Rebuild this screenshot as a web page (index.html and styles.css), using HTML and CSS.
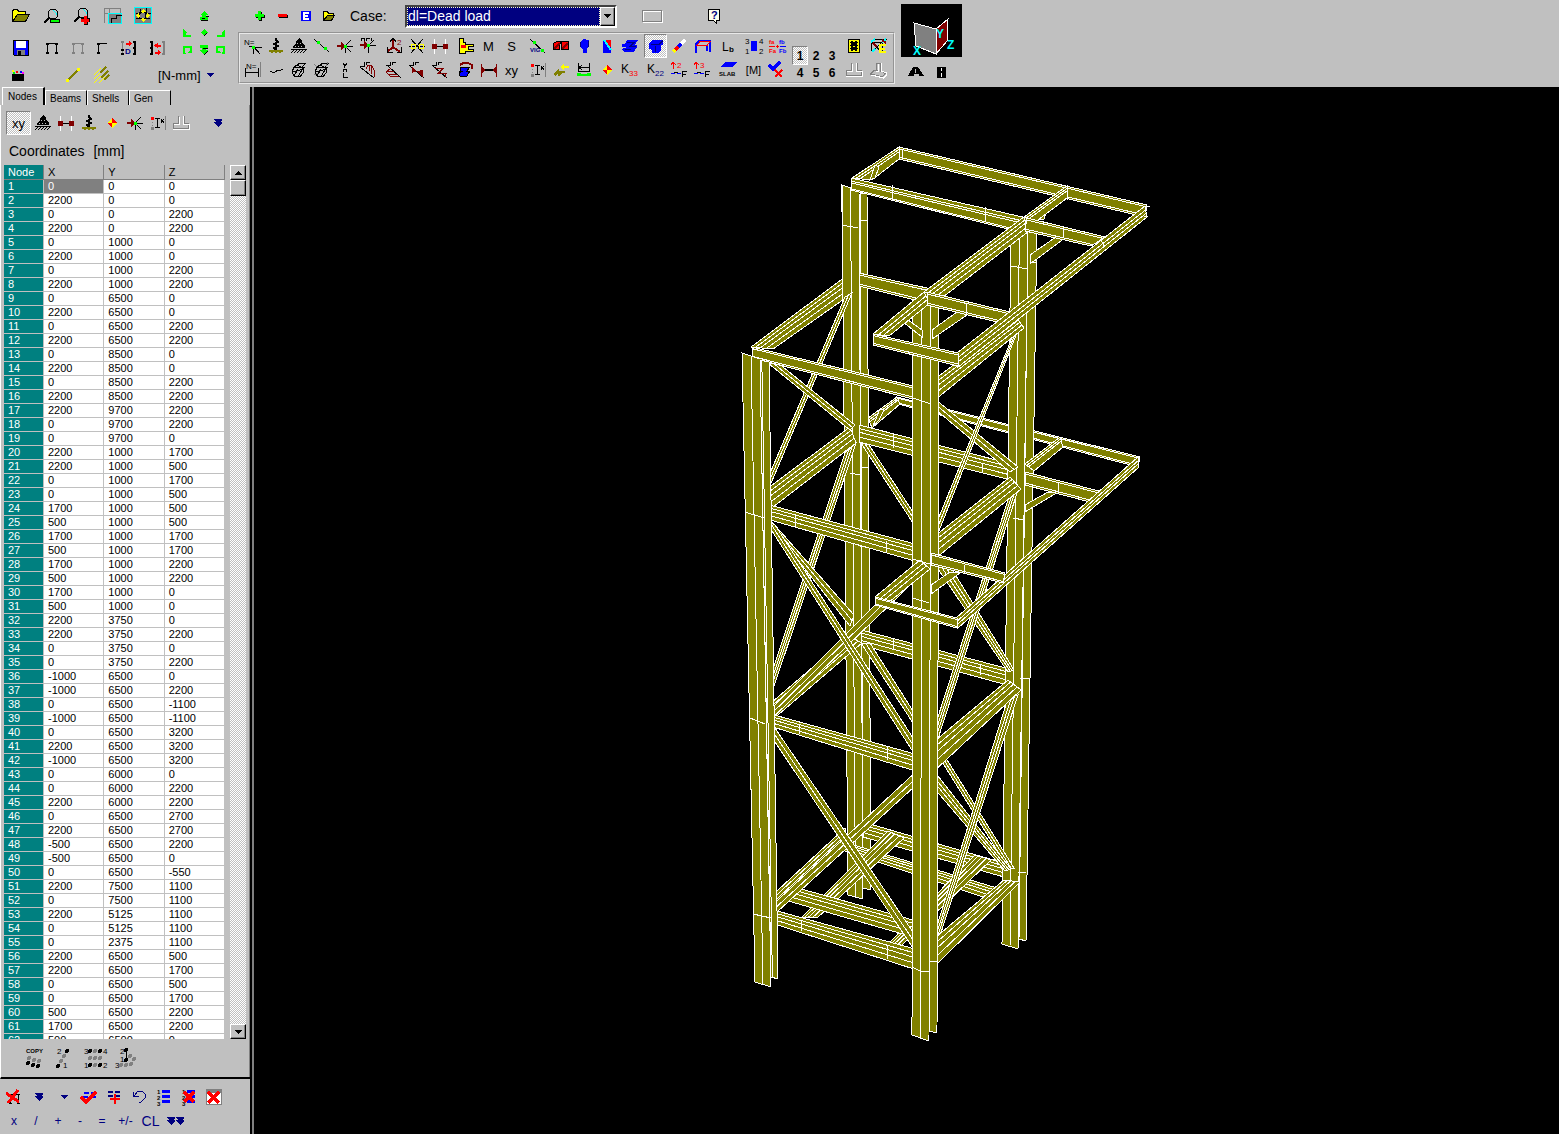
FILE: index.html
```
<!DOCTYPE html>
<html lang="en">
<head>
    <meta charset="UTF-8">
    <meta name="viewport" content="width=device-width, initial-scale=1.0">
    <title>Frame model - Nodes</title>
    <link rel="stylesheet" href="styles.css">
</head>
<body>
    <header class="topbar">
        <div class="file-tools">
            <div class="row row-one">
                <button aria-label="Open"><svg width="20" height="16"><path fill="#ff0" stroke="#000" d="M1.5 13.5v-11l2-1h3l1 2h7v3h-8z"/><path fill="#808000" stroke="#000" d="M1.5 13.5l5-7h12l-4 7z"/></svg></button>
                <button aria-label="Zoom window"><svg width="20" height="18"><circle cx="10" cy="7" r="5" fill="#c0c0c0" stroke="#000"/><path d="M10 3l3 3v2" stroke="#0ff"/><path d="M6 11l-5 5" stroke="#000" stroke-width="2"/><path d="M7.500 12.500h9v3h-9z" fill="#0f0" stroke="#000"/></svg></button>
                <button aria-label="Zoom in"><svg width="20" height="18"><circle cx="10" cy="6" r="5" fill="#c0c0c0" stroke="#000"/><path d="M10 2l3 3v2" stroke="#0ff"/><path d="M6 10l-5 5" stroke="#000" stroke-width="2"/><path d="M8 13h9M12.500 9v9" stroke="#000" stroke-width="4"/><path d="M8 13h8M12 9v8" stroke="red" stroke-width="3"/></svg></button>
                <button aria-label="Zoom part"><svg width="20" height="18"><path d="M1.500 16v-14.500h16v5M1 6.500h5M6.500 1v5" stroke="#808080"/><path d="M5.500 6.500h13v10h-13z" fill="#808080" stroke="#0ff"/><path d="M8.500 16v-5h5M13.500 12v-4h5" stroke="#000"/></svg></button>
                <button aria-label="Full view"><svg width="20" height="18"><path d="M1.500.500h17v16h-17z" fill="#808080" stroke="#0ff"/><path d="M3 6.500h4v-5M7 11.500h-4M13.500 1v5h4M13 11.500h4M6.500 5.500h6v6h-6z" stroke="#000"/><path d="M10 2l3 3h-2v1h-2v-1h-2zM10 15l3-3h-2v-1h-2v1h-2zM3 8.500l3-3v2h1v2h-1v2zM17 8.500l-3-3v2h-1v2h1v2z" fill="#ff0"/></svg></button>
            </div>
            <div class="row row-two">
                <button aria-label="Save"><svg width="18" height="18"><path d="M1.500 1.500h15v15h-14l-1-1z" fill="#00f" stroke="#000"/><path d="M4 2h10v7h-10z" fill="#fff"/><path d="M5 11h8v5h-8z" fill="#808080"/><path d="M6 12h3v4h-3z" fill="#000"/></svg></button>
                <button aria-label="Beam portal"><svg width="14" height="14"><path d="M2.500 12v-9.500h9v9.500M1 2.500h3M10 2.500h3M1 11.500h3M10 11.500h3M1 3.500h3M10 3.500h3M1 12.500h3M10 12.500h3" stroke="#000"/></svg></button>
                <button aria-label="Portal, hidden"><svg width="14" height="14"><path d="M2.500 12v-9.500h9v9.500M1 2.500h3M10 2.500h3M1 3.500h3M10 3.500h3M1 11.500h3M10 11.500h3M1 12.500h3M10 12.500h3" stroke="#808080"/></svg></button>
                <button aria-label="Half portal"><svg width="14" height="14"><path d="M3.500 12v-9.500h8M2 2.500h3M2 3.500h3M2 11.500h3M2 12.500h3" stroke="#000"/></svg></button>
                <button aria-label="Copy frame"><svg width="18" height="16"><path d="M2.500 2v12" stroke="#808080"/><path d="M14.500 2v12M13 2h3M13 8h3M13 14h3M1 10h3M1 14h3" stroke="#000" stroke-width="2"/><path d="M1 2h3" stroke="#808080" stroke-width="2"/><path d="M6 2.500h3v-2l3 3-3 3v-2h-3z" fill="red"/><text x="5" y="14" class="tiny bold" fill="#000080">D</text></svg></button>
                <button aria-label="Move frame"><svg width="18" height="16"><path d="M2.500 2v12M1 2h3M1 8h3M1 14h3" stroke="#000" stroke-width="2"/><path d="M14.500 2v12M13 2h3M13 14h3" stroke="#808080" stroke-width="2"/><path d="M12 4.500h-3v-2l-4 3 4 3v-2h3zM6 11.500h3v-2l3 3-3 3v-2h-3z" fill="red"/></svg></button>
            </div>
            <div class="row row-three">
                <button aria-label="Colours"><svg width="14" height="14"><path d="M1 6h12v7h-12z" fill="#000"/><path d="M1 2h2v2h-2z" fill="#ff0"/><path d="M5 3h2v2h-2z" fill="red"/><path d="M9 3h2v2h-2z" fill="#00f"/><path d="M2 4h2v2h-2z" fill="#0f0"/><path d="M11 4h2v2h-2z" fill="#f0f"/></svg></button>
                <button class="single" aria-label="Single line"><svg width="18" height="16"><path d="M2 14l12-12" stroke="#808000" stroke-width="2"/><path d="M1 12h3v3h-3zM12 1h3v3h-3z" fill="#ff0"/></svg></button>
                <button aria-label="Multiple lines"><svg width="20" height="18"><path d="M8 7l6-6M9 12l7-7M12 14l5-5" stroke="#808000" stroke-width="2"/><path d="M2 9l7-7M2 13l6-6M2 17l7-7M7 17l6-6" stroke="#ff0"/></svg></button>
                <select class="units" aria-label="Units"><option>[N-mm]</option></select>
                <svg width="8" height="5"><path d="M0 0h8l-4 4z" fill="#000080"/></svg>
            </div>
            <div class="nav-pad">
                <span></span>
                <button aria-label="Pan up"><svg width="10" height="12"><path d="M5 1l4 4h-2v2h2v3h-8v-3h2v-2h-2z" fill="#0f0"/><path d="M7 6.500h3M3 8.500h3M2 10.500h7" stroke="#000"/></svg></button>
                <span></span>
                <button aria-label="Rotate left"><svg width="10" height="10"><path d="M1 9v-8l4 4h-1v2h5v2z" fill="#0f0"/></svg></button>
                <button aria-label="Centre"><svg width="8" height="8"><path d="M4 0l4 4-4 3-3-3z" fill="#0f0"/><path d="M7 4l-3 3" stroke="#000"/></svg></button>
                <button aria-label="Rotate right"><svg width="10" height="10"><path d="M9 9v-8l-4 4h1v2h-5v2z" fill="#0f0"/></svg></button>
                <button aria-label="Turn left"><svg width="10" height="10"><path d="M1 9v-8h9v7h-5l2-2h1v-3h-5v3l1 3z" fill="#0f0"/></svg></button>
                <button aria-label="Pan down"><svg width="10" height="12"><path d="M1 1h8v3h-2v2h2l-4 5-4-5h2v-2h-2z" fill="#0f0"/><path d="M4 4.500h5M9 7l-4 4" stroke="#000"/></svg></button>
                <button aria-label="Turn right"><svg width="10" height="10"><path d="M9 9v-8h-9v7h5l-2-2h-1v-3h5v3l-1 3z" fill="#0f0"/></svg></button>
            </div>
        </div>

        <div class="load-tools">
            <div class="case-bar">
                <button aria-label="Add case"><svg width="12" height="12"><path d="M2 6.500h9M6.500 2v9" stroke="#000" stroke-width="3"/><path d="M1 5.500h9M5.500 1v9" stroke="#0f0" stroke-width="3"/></svg></button>
                <button aria-label="Delete case"><svg width="12" height="12"><path d="M2 6.500h9" stroke="#000" stroke-width="3"/><path d="M1 5.500h9" stroke="red" stroke-width="3"/></svg></button>
                <button aria-label="Edit case"><svg width="12" height="12"><path d="M1 1h10v10h-10z" fill="#00f"/><path d="M9 3h-5v6h5M4 6h4" stroke="#fff" stroke-width="2"/></svg></button>
                <button aria-label="Open case"><svg width="14" height="12"><path fill="#ff0" stroke="#000" d="M1.500 10.500v-9h4l1 2h5v2h-6z"/><path fill="#808000" stroke="#000" d="M1.500 10.500l4-5h7l-3 5z"/></svg></button>
                <label for="load-case">Case:</label>
                <div class="combo">
                    <select id="load-case"><option>dl=Dead load</option></select>
                    <span class="combo-arrow bevel"><svg width="7" height="4"><path d="M0 0h7l-3.500 4z" fill="#000"/></svg></span>
                </div>
                <button class="blank" aria-label="Case colour"></button>
                <button class="help" aria-label="Help"><svg width="14" height="16"><path d="M1.500 1.500h11v11h-3v3l-3-3h-5z" fill="#ffe" stroke="#000"/><text x="4" y="11" class="bold help-mark" fill="#000080">?</text></svg></button>
            </div>

            <div class="result-box">
                <div class="strip">
                    <span class="group">
                        <button aria-label="Node numbers"><svg class="icon"><text x="1" y="8" class="tiny">N=</text><path d="M6 9.500h6M11 10l6 7M11 10.500h8M10.500 11v6" stroke="#000"/><path d="M9 9h3v3h-3z" fill="#0f0"/></svg></button>
                        <button aria-label="Springs"><svg class="icon" id="spring"><path d="M10 1v2l2 2-4 2 4 2-4 2 3 2" stroke="#000" stroke-width="2"/><path d="M3 13h14v2h-2v1h-2v-1h-2v1h-2v-1h-2v1h-2v-1h-2z" fill="#808000"/></svg></button>
                        <button aria-label="Supports"><svg class="icon" id="support"><path d="M10 1l3 3v2l3 3v2h-12v-2l3-3v-2z" fill="#000"/><path d="M2 12.500h16M5 13l-3 3M8 13l-3 3M11 13l-3 3M14 13l-3 3M17 13l-3 3" stroke="#000"/><path d="M6 9.500h1M9 9.500h1M12 9.500h1M8 6.500h1M11 6.500h1" stroke="#c0c0c0"/></svg></button>
                        <button aria-label="Beam"><svg class="icon"><path d="M2 2l15 13" stroke="#000"/><path d="M5 4h3v3h-3zM12 10h3v3h-3z" fill="#0f0"/></svg></button>
                        <button aria-label="Nodal load"><svg class="icon" id="nodeload"><path d="M2 8h4v-3l4 4-4 4v-3h-4z" fill="#800000"/><path d="M10 9.500h8M11 8l5-5M11 10l5 5M10.500 9v7" stroke="#000"/><path d="M9 8h3v3h-3z" fill="#0f0"/></svg></button>
                        <button aria-label="Dynamic load"><svg class="icon"><path d="M2 7h4v-3l4 4-4 4v-3h-4z" fill="#800000"/><path d="M10 8.500h8M11 8l5-5M10.500 9v7M3.500 4v-3h3v3M8.500 4v-3h3M13.500 1v3" stroke="#000"/><path d="M9 7h3v3h-3z" fill="#0f0"/></svg></button>
                    </span>
                    <span class="group">
                        <button aria-label="Local axes"><svg class="icon"><path d="M9 2v8l-6 5M9 10l7 5" stroke="#800000" stroke-width="2"/><path d="M3.500 10v5.500h5M17.500 10v5.500h-5M6 4.500l3-3 3 3" stroke="#000"/><text x="13" y="8" class="tiny" fill="#800000">2</text></svg></button>
                        <button aria-label="Releases"><svg class="icon"><path d="M4 2l12 14M16 2l-12 14M2 9.500h16" stroke="#000"/><path d="M4.500 7.500h4v4h-4zM12.500 7.500h4v4h-4z" stroke="#ff0"/></svg></button>
                        <button aria-label="Rigid links"><svg class="icon" id="link"><path d="M4.500 2v15M15.500 2v15" stroke="#fff"/><path d="M4 9.500h12" stroke="#000"/><path d="M2 7h5v5h-5zM13 7h5v5h-5z" fill="#800000"/></svg></button>
                    </span>
                    <span class="group">
                        <button aria-label="Sections"><svg class="icon"><path d="M3.500 1.500h4v4h2v2h8v2h-5v3h5v2h-8v2h-2v0h-4z" fill="#ff0" stroke="#000"/><path d="M5 8h5v3h-5z" fill="red"/></svg></button>
                        <button class="letter">M</button>
                        <button class="letter">S</button>
                    </span>
                    <span class="group">
                        <button aria-label="View beam"><svg class="icon"><path d="M2 2l15 14" stroke="#000"/><path d="M5 4h3v3h-3zM13 12h3v3h-3z" fill="#0f0"/><text x="2" y="15" class="micro" fill="#000080">VIG</text></svg></button>
                        <button aria-label="Brick elements"><svg class="icon"><path d="M2.500 6.500l3-2h5l-2 3v5h-6zM10.500 4.500h7v8h-7z" fill="red" stroke="#000"/><path d="M3 11.500l6-5M11 11.500l6-5" stroke="#800000" stroke-width="2"/></svg></button>
                        <button aria-label="Solid view"><svg class="icon"><path d="M9 2l6 1v7l-2 1v5h-4v-4l-3-2v-5z" fill="#00f"/><path d="M6.500 5v5M14.500 4v6" stroke="#000080"/></svg></button>
                        <button aria-label="Stress map"><svg class="icon"><path d="M6 3h8v13h-8z" fill="#00f"/><path d="M7 3l7 8v-8z" fill="red"/><path d="M7 3l7 10" stroke="#0ff" stroke-width="2"/></svg></button>
                        <button aria-label="Extruded section"><svg class="icon"><path d="M7 3h11l-3 5h2v2l-3 5h-10l-2-3 5-2h-5v-3h3z" fill="#00f"/><path d="M7 5.500h7l-4 4h6M5 12.500h6" stroke="#000080"/></svg></button>
                    </span>
                    <span class="group">
                        <button class="pressed" aria-label="Extruded view"><svg class="icon"><path d="M6 3h11v5h-2v5l-3 3h-6v-3l-3-1v-5z" fill="#00f"/><path d="M5 7.500h8l4-4M9 9v6" stroke="#000080"/></svg></button>
                        <button aria-label="Colour range"><svg class="icon"><path d="M4 15l4-4" stroke="#ff0" stroke-width="4"/><path d="M6 13l3-3" stroke="red" stroke-width="3"/><path d="M9 10l4-4" stroke="#00f" stroke-width="3"/><path d="M12 7l4-4" stroke="#fff" stroke-width="3"/></svg></button>
                        <button aria-label="Frame loads"><svg class="icon"><path d="M4 16v-9l3-3h11v11M15 8v6" stroke="#00f" stroke-width="2"/><path d="M5 8.500h10l3-4h-10z" stroke="red"/></svg></button>
                    </span>
                    <span class="group">
                        <button aria-label="Buckling length"><svg class="icon"><text x="4" y="14" class="small">L</text><text x="11" y="15" class="tiny bold">b</text></svg></button>
                    </span>
                    <span class="group">
                        <button aria-label="Shell nodes"><svg class="icon"><path d="M7 4h6v10h-6z" fill="#00f"/><text x="1" y="7" class="tiny">3</text><text x="15" y="7" class="tiny">4</text><text x="1" y="17" class="tiny">1</text><text x="15" y="17" class="tiny">2</text></svg></button>
                        <button aria-label="Stress ratio"><svg class="icon"><text x="2" y="7" class="micro" fill="red">fa</text><text x="2" y="16" class="micro" fill="red">Fa</text><path d="M2 9.500h6M9 9.500h3M10.500 8v3" stroke="red"/><text x="12" y="7" class="micro" fill="#00f">fb</text><text x="12" y="16" class="micro" fill="#00f">Fb</text><path d="M13 9.500h6" stroke="#00f"/></svg></button>
                    </span>
                </div>
                <div class="strip">
                    <span class="group">
                        <button aria-label="Beam numbers"><svg class="icon"><text x="3" y="8" class="tiny">N=</text><path d="M2.500 7v9M2 11.500h14M15.500 7v9" stroke="#000"/><path d="M17.500 1v15" stroke="#808080"/></svg></button>
                        <button aria-label="Deformed shape"><svg class="icon"><path d="M4 10l2 1h3l3-2h3l2-1" stroke="#000"/></svg></button>
                        <button aria-label="Shell ring"><svg class="icon" id="ring"><path d="M5 6l6-4h6M5 6h8l4-4M5 6l-2 5 2 4 6 1 3-4 1-6M3 11l8-2 5-3M5 15l4-7M9 16l5-9M8 4l6 3" stroke="#000"/></svg></button>
                        <button aria-label="Shell ring loads"><svg class="icon"><use href="#ring"/><path d="M2 3l3 3M16 1l-2 4M2 14l4-2" stroke="#808080"/></svg></button>
                        <button aria-label="Vertical constraint"><svg class="icon"><path d="M8 2l2 3 2-3M9.500 5v2M8.500 11v-3h3v3M8.500 12v4h4" stroke="#000"/></svg></button>
                        <button aria-label="Moment diagram"><svg class="icon"><path d="M2.500 6v-1h4v-4M8.500 4v-3h3M2 6l14 11" stroke="#000"/><path d="M8 8l2-4 4 1 2 4v7M11 10v-6M13.500 13v-8" stroke="#800000"/></svg></button>
                    </span>
                    <span class="group">
                        <button aria-label="Shear diagram"><svg class="icon"><path d="M2 4.500h4v-4M8.500 4v-3h3M4 5l13 12" stroke="#000"/><path d="M7 7l-5 4 4 4 9 1M3 10.500h7M4 13.500h9" stroke="#800000"/></svg></button>
                        <button aria-label="Axial diagram"><svg class="icon"><path d="M2 4.500h4v-4M8.500 4v-3h3M3 5l14 12" stroke="#000"/><path d="M5 6v6l5-2 6-1v7z" fill="#800000"/></svg></button>
                        <button aria-label="Torsion diagram"><svg class="icon"><path d="M2 4.500h4v-4M8.500 4v-3h3M3 5l14 12" stroke="#000"/><path d="M5 7.500h8l-5 5h9M15.500 12v4" stroke="#800000"/></svg></button>
                    </span>
                    <span class="group">
                        <button aria-label="Rotate section"><svg class="icon"><path d="M5 6h9l-3 4h3l-3 5h-7l-1-3 4-2h-3z" fill="#00f" stroke="#000"/><path d="M4 4l3-2h5l4 2v4" stroke="#800000" stroke-width="2"/></svg></button>
                        <button aria-label="End offsets"><svg class="icon"><path d="M2.500 3v13M17.500 3v13" stroke="#800000"/><path d="M2 5l5 4-5 4zM18 5l-5 4 5 4z" fill="#800000"/><path d="M6 9h8" stroke="#000" stroke-width="2"/></svg></button>
                        <button class="letter">xy</button>
                    </span>
                    <span class="group">
                        <button aria-label="Beam dimensions"><svg class="icon" id="dims"><path d="M3 3h3v3h-3z" fill="red"/><path d="M3 13h3v3h-3zM4 8h1v1h-1zM4 11h1v1h-1z" fill="#808080"/><path d="M7 4.500h5M9.500 5v9M7 13.500h5M13 5l3 4M16 5l-3 4" stroke="#000"/><path d="M17.500 2v14" stroke="#808080"/></svg></button>
                        <button aria-label="Uniform load"><svg class="icon"><path d="M9 6l4-3v2h5v2h-5v2z" fill="#ff0"/><path d="M3 12l5-4v2h6v2h-3l-2 3h-2v-2l-3 2z" fill="#808000"/></svg></button>
                        <button aria-label="Base plates"><svg class="icon"><path d="M4.500 2v9M15.500 2v9M5 6.500h10M8 4l-3 2.500 3 2.500M4 10.500h12" stroke="#000"/><path d="M3 12h4v1h6v-1h4v3h-14z" fill="#0f0"/></svg></button>
                        <button aria-label="Centre of mass"><svg class="icon" id="mass"><path d="M10 9v-5l-5 5zM10 9v5l5-5z" fill="#ff0"/><path d="M10 9v-5l5 5zM10 9v5l-5-5z" fill="red"/></svg></button>
                        <button aria-label="K33"><svg class="icon"><text x="1" y="12" class="small">K</text><text x="9" y="15" class="tiny" fill="red">33</text></svg></button>
                    </span>
                    <span class="group">
                        <button aria-label="K22"><svg class="icon"><text x="1" y="12" class="small">K</text><text x="9" y="15" class="tiny" fill="#000080">22</text></svg></button>
                        <button aria-label="Axis 2"><svg class="icon"><path d="M4.500 1v7M2 4l2-3 3 3" stroke="red"/><text x="8" y="7" class="tiny" fill="red">2</text><path d="M2 12.500h4M8 12.500h4" stroke="#00f"/><path d="M5 11.500h4M13.500 10v6M14 10.500h4M14 13.500h3" stroke="#000"/></svg></button>
                        <button aria-label="Axis 3"><svg class="icon"><path d="M4.500 1v7M2 4l2-3 3 3" stroke="red"/><text x="8" y="7" class="tiny" fill="red">3</text><path d="M2 12.500h4M8 12.500h4" stroke="#00f"/><path d="M5 11.500h4M13.500 10v6M14 10.500h4M14 13.500h3" stroke="#000"/></svg></button>
                    </span>
                    <span class="group">
                        <button aria-label="Slab"><svg class="icon"><path d="M3 6l4-5h12l-4 5z" fill="#00f"/><text x="1" y="15" class="micro">SLAB</text></svg></button>
                    </span>
                    <span class="group">
                        <button class="letter narrow">[M]</button>
                        <button aria-label="Check"><svg class="icon"><path d="M2 4l4 4 7-7" stroke="#00f" stroke-width="3"/><path d="M8 9l7 7M15 9l-7 7" stroke="red" stroke-width="2"/></svg></button>
                    </span>
                </div>
                <div class="views">
                    <button class="pressed">1</button>
                    <button>2</button>
                    <button>3</button>
                    <button>4</button>
                    <button>5</button>
                    <button>6</button>
                </div>
                <div class="extras">
                    <button aria-label="Film"><svg class="icon"><path d="M4.500 2.500h11v13h-11z" fill="#ff0" stroke="#000"/><path d="M7 4h6v10h-6z" fill="#000"/><path d="M6 5.500h1M6 8.500h1M6 11.500h1M13 5.500h1M13 8.500h1M13 11.500h1" stroke="#000"/><path d="M9 4.500h2M9 9h2M9 13.500h2" stroke="#ff0"/></svg></button>
                    <button aria-label="Envelope"><svg class="icon"><path d="M2.500 14v-9l4-3h11l-4 3h-11M13.500 5v9M2 5l11 10M13 5l-10 10" stroke="#000"/><path d="M2 5l4-3M13 5l4-3M3 15l3-3" stroke="#0ff" stroke-width="2"/><path d="M4 6l4 4M13 3l4 3" stroke="#800000" stroke-width="2"/><path d="M17 8h-6v7h6M11 11.500h5" stroke="#ff0" stroke-width="2"/></svg></button>
                    <button aria-label="Footing"><svg class="icon" id="footing"><path d="M7.500 2v7.500h-5v5h15v-5h-4v-7.500" stroke="#808080"/><path d="M3 10.500h5.500v-8M12.500 2v8h5M2 15.500h16.500v-6" stroke="#fff"/></svg></button>
                    <button aria-label="Pile"><svg class="icon"><path d="M7.500 9v-7h4v8l5 2-3 4-12-3 4-4h3" stroke="#808080"/><path d="M9.500 3v7h-3M12.500 2v8l5 2v2l-3 3-12-3" stroke="#fff"/></svg></button>
                </div>
            </div>
        </div>

        <div class="orientation">
            <svg class="cube" viewBox="0 0 61 53">
                <path d="M13 19l22 6v25l-20-8z" fill="#808080" stroke="#fff"/>
                <path d="M35 25l12-10-1 22-11 13z" fill="#800000" stroke="#fff"/>
                <text x="12" y="51" class="axis">X</text>
                <text x="35" y="34" class="axis">Y</text>
                <text x="46" y="45" class="axis">Z</text>
            </svg>
            <div class="row">
                <button aria-label="Perspective"><svg width="16" height="10"><path d="M5 0h5l6 9h-5v-2h-5v2h-6z" fill="#000"/><path d="M7 2h1v4h-1z" fill="#c0c0c0"/></svg></button>
                <button aria-label="Parallel"><svg width="12" height="12"><path d="M1 1h9v11h-9z" fill="#000"/><path d="M5 2h1v3h-1zM5 7h1v4h-1z" fill="#fff"/></svg></button>
            </div>
        </div>
    </header>

    <main class="workspace">
        <aside class="sidebar">
            <nav class="tabs">
                <button class="tab active">Nodes</button>
                <button class="tab">Beams</button>
                <button class="tab">Shells</button>
                <button class="tab">Gen</button>
            </nav>
            <section class="panel">
                <div class="node-tools">
                    <button class="letter pressed">xy</button>
                    <button aria-label="Supports"><svg class="icon"><use href="#support"/></svg></button>
                    <button aria-label="Rigid links"><svg class="icon"><use href="#link"/></svg></button>
                    <button aria-label="Springs"><svg class="icon"><use href="#spring"/></svg></button>
                    <button aria-label="Masses"><svg class="icon"><use href="#mass"/></svg></button>
                    <button aria-label="Nodal loads"><svg class="icon"><use href="#nodeload"/></svg></button>
                    <button aria-label="Offsets"><svg class="icon"><use href="#dims"/></svg></button>
                    <button aria-label="Footings"><svg class="icon"><use href="#footing"/></svg></button>
                    <button class="more" aria-label="More"><svg width="10" height="10"><path id="down2" d="M1 1h8v1l-2 2h2v1l-4 4-4-4v-1h2l-2-2z" fill="#000080"/></svg></button>
                </div>
                <h1 class="panel-title">Coordinates <span>[mm]</span></h1>
                <div class="grid-wrap">
                    <table>
                        <thead>
                            <tr><th>Node</th><th>X</th><th>Y</th><th>Z</th></tr>
                        </thead>
                        <tbody id="node-rows"></tbody>
                    </table>
                    <div class="scrollbar">
                        <button class="bevel" aria-label="Scroll up"><svg width="7" height="4"><path d="M0 4h7l-3.500-4z" fill="#000"/></svg></button>
                        <div class="thumb bevel"></div>
                        <button class="bevel" aria-label="Scroll down"><svg width="7" height="4"><path d="M0 0h7l-3.500 4z" fill="#000"/></svg></button>
                    </div>
                </div>
                <div class="copy-tools">
                    <button aria-label="Copy nodes"><svg width="24" height="22"><text x="4" y="6" class="micro">COPY</text><g fill="#808080"><circle cx="7" cy="11" r="2"/><circle cx="12" cy="13" r="2"/><circle cx="17" cy="14" r="2"/></g><g fill="#000"><circle cx="6" cy="16" r="2"/><circle cx="11" cy="18" r="2"/><circle cx="16" cy="19" r="2"/></g></svg></button>
                    <button aria-label="Nodes on a line"><svg width="24" height="22"><text x="4" y="7" class="tiny">2</text><text x="10" y="21" class="tiny">1</text><g fill="#000"><circle cx="14" cy="4" r="2"/><circle cx="5" cy="19" r="2"/></g><g fill="#808080"><circle cx="11" cy="9" r="2"/><circle cx="8" cy="14" r="2"/></g></svg></button>
                    <button aria-label="Nodes on a grid"><svg width="24" height="22"><text x="0" y="7" class="tiny">3</text><text x="19" y="7" class="tiny">4</text><text x="0" y="21" class="tiny">1</text><text x="19" y="21" class="tiny">2</text><g fill="#000"><circle cx="6" cy="4" r="2"/><circle cx="16" cy="4" r="2"/><circle cx="6" cy="18" r="2"/><circle cx="16" cy="18" r="2"/></g><g fill="#808080"><circle cx="11" cy="4" r="2"/><circle cx="6" cy="11" r="2"/><circle cx="11" cy="11" r="2"/><circle cx="16" cy="11" r="2"/><circle cx="11" cy="18" r="2"/></g></svg></button>
                    <button aria-label="Nodes on an arc"><svg width="24" height="22"><text x="5" y="7" class="tiny">2</text><text x="5" y="15" class="tiny">1</text><text x="0" y="21" class="tiny">3</text><path d="M11.500 4v9" stroke="#000"/><g fill="#000"><circle cx="11" cy="3" r="2"/><circle cx="11" cy="13" r="2"/></g><g fill="#808080"><circle cx="15" cy="9" r="2"/><circle cx="19" cy="12" r="2"/><circle cx="16" cy="17" r="2"/><circle cx="11" cy="18" r="2"/><circle cx="6" cy="18" r="2"/></g></svg></button>
                </div>
            </section>
            <footer class="edit-tools">
                <div class="row">
                    <button aria-label="Delete selection"><svg width="18" height="18"><path d="M5.500 16v-9.500h8v9.500M4 15h3M12 15h3M12 6h3" stroke="#000"/><path d="M1 5l13 9M13 2l-10 13" stroke="red" stroke-width="3"/></svg></button>
                    <button aria-label="Last"><svg width="10" height="10"><use href="#down2"/></svg></button>
                    <button aria-label="Next"><svg width="8" height="4"><path d="M0 0h8l-4 4z" fill="#000080"/></svg></button>
                    <button aria-label="Accept"><svg width="18" height="16"><path d="M4 4h5M11 4h4M2 8h6M11 8h5" stroke="#00f" stroke-width="2"/><path d="M1 8l5 5 10-10" stroke="red" stroke-width="3"/></svg></button>
                    <button aria-label="Add row"><svg width="16" height="16"><path d="M2 3h5M9 3h5M2 7h5M9 7h5" stroke="#000080" stroke-width="2"/><path d="M4 10h10M9 5v10" stroke="red" stroke-width="2"/></svg></button>
                    <button aria-label="Undo"><svg width="16" height="16"><path d="M2.500 3v4.500h5M3 7l4-5h4l3 3v4l-4 4h-2" stroke="#000080"/></svg></button>
                    <button aria-label="Numbered list"><svg width="18" height="18"><g id="listing"><text x="2" y="6" class="micro">1</text><text x="2" y="12" class="micro">2</text><text x="2" y="18" class="micro">3</text><path d="M7 3.500h8M7 8.500h8M7 13.500h8" stroke="#00f" stroke-width="3"/></g></svg></button>
                    <button aria-label="Delete list"><svg width="18" height="18"><use href="#listing"/><path d="M4 4l10 10M14 4l-10 10" stroke="red" stroke-width="4"/></svg></button>
                    <button aria-label="Delete table"><svg width="18" height="18"><path d="M1.500 1.500h15v15h-15z" fill="#fff" stroke="#808080"/><path d="M2 3.500h14" stroke="#808080" stroke-width="3"/><path d="M3 4l11 11M14 4l-11 11" stroke="red" stroke-width="3"/></svg></button>
                </div>
                <div class="row keys">
                    <button>x</button>
                    <button>/</button>
                    <button>+</button>
                    <button>-</button>
                    <button>=</button>
                    <button class="wide">+/-</button>
                    <button class="wide clear">CL</button>
                    <button class="wide" aria-label="Bottom"><svg width="19" height="10"><use href="#down2"/><use href="#down2" x="9"/></svg></button>
                </div>
            </footer>
        </aside>
        <svg id="model" class="model" viewBox="254 87 1305 1047" role="img" aria-label="Steel frame"></svg>
    </main>

    <script src="script.js"></script>
</body>
</html>
```

FILE: styles.css
```
body {
    font-family: "Liberation Sans", Arial, sans-serif;
    font-size: 14px;
    margin: 0;
    height: 100vh;
    display: flex;
    flex-direction: column;
    overflow: hidden;
    background-color: #c0c0c0;
    color: #000;
}
button {
    display: flex;
    align-items: center;
    justify-content: center;
    padding: 0;
    border: 0;
    background: none;
    font: inherit;
    color: inherit;
}
select {
    appearance: none;
    border: 0;
    border-radius: 0;
    padding: 0;
    margin: 0;
    font: inherit;
}
svg {
    display: block;
    fill: none;
    shape-rendering: crispEdges;
}
svg text {
    fill: #000;
}
svg text[fill="red"] {
    fill: red;
}
svg text[fill="#00f"] {
    fill: #00f;
}
svg text[fill="#000080"] {
    fill: #000080;
}
svg text[fill="#800000"] {
    fill: #800000;
}
.icon {
    width: 20px;
    height: 18px;
    flex: none;
}
.micro {
    font-size: 6px;
    font-weight: bold;
}
.tiny {
    font-size: 8px;
}
.small {
    font-size: 12px;
}
.bold {
    font-weight: bold;
}
.help-mark {
    font-size: 11px;
}
.row {
    display: flex;
    align-items: center;
}
.bevel {
    background: #c0c0c0;
    border: 1px solid;
    border-color: #fff #000 #000 #fff;
    box-shadow: inset -1px -1px #808080;
}
.pressed {
    background: repeating-conic-gradient(#fff 0 25%, #c0c0c0 0 50%) 0 0 / 2px 2px;
    border: 1px solid;
    border-color: #808080 #fff #fff #808080;
    box-sizing: border-box;
}

/* top toolbar */
.topbar {
    display: flex;
    align-items: flex-start;
}
.file-tools {
    display: grid;
    grid-template-columns: 178px 60px;
    grid-template-rows: 32px 31px 24px;
    flex: none;
}
.file-tools .row {
    display: grid;
    grid-column: 1;
    padding-left: 4px;
}
.file-tools .row-one {
    grid-template-columns: 34px repeat(4, 30px);
}
.file-tools .row-two {
    grid-template-columns: 34px 28px 24px 24px 30px 28px;
}
.file-tools .row-three {
    grid-column: 1 / 3;
    grid-template-columns: 26px 86px 0 0 48px 12px;
    display: flex;
}
.row-three button {
    width: 28px;
}
.row-three .single {
    margin-left: 28px;
}
.row-three .units {
    width: 48px;
    margin-left: 42px;
    font-size: 13px;
    background: none;
}
.nav-pad {
    grid-column: 2;
    grid-row: 1 / 3;
    display: grid;
    grid-template-columns: repeat(3, 17px);
    grid-template-rows: repeat(3, 17px);
    padding-top: 7px;
}
.load-tools {
    flex: none;
}
.case-bar {
    display: flex;
    align-items: center;
    height: 32px;
    padding-left: 10px;
}
.case-bar > button {
    width: 23px;
}
.case-bar label {
    width: 45px;
    margin-left: 10px;
}
.case-bar .combo {
    display: flex;
    width: 208px;
    margin-left: 10px;
    height: 19px;
    border: 2px solid;
    border-color: #404040 #fff #fff #404040;
}
.combo select {
    flex: 1;
    background: #000080;
    color: #fff;
    padding-left: 1px;
    outline: 1px dotted #ffffc0;
    outline-offset: -1px;
}
.combo-arrow {
    display: flex;
    align-items: center;
    justify-content: center;
    width: 13px;
}
.case-bar .blank {
    box-sizing: border-box;
    width: 20px;
    height: 12px;
    margin-left: 25px;
    border: 1px solid #808080;
    box-shadow: inset 1px 1px #fff, 1px 1px #fff;
}
.case-bar .help {
    margin-left: 40px;
}
.result-box {
    display: grid;
    grid-template-columns: 551px 50px 52px;
    grid-template-rows: 24px 24px;
    border: 2px groove #e8e8e8;
}
.strip {
    display: flex;
    gap: 3px;
    grid-column: 1;
    padding-left: 1px;
}
.group {
    display: flex;
}
.group button {
    width: 23px;
    height: 24px;
}
.letter {
    font-size: 13px;
}
.narrow {
    font-size: 11px;
}
.views {
    grid-column: 2;
    grid-row: 1 / 3;
    display: grid;
    grid-template-columns: repeat(3, 16px);
    grid-template-rows: 19px 16px;
    padding: 12px 0 0 1px;
    font-size: 12px;
    font-weight: bold;
}
.extras {
    grid-column: 3;
    grid-row: 1 / 3;
    display: grid;
    grid-template-columns: 25px 25px;
}
.orientation {
    margin: 4px 0 0 6px;
}
.cube {
    width: 61px;
    height: 53px;
    background: #000;
}
.cube .axis {
    fill: #0ff;
    font-size: 12px;
    font-weight: bold;
}
.orientation .row {
    height: 29px;
    gap: 12px;
    padding-left: 7px;
}

/* side panel */
.workspace {
    flex: 1;
    display: flex;
    min-height: 0;
}
.sidebar {
    flex: 0 0 250px;
    display: flex;
    flex-direction: column;
    border-right: 2px solid #000;
    box-shadow: 2px 0 #808080;
    margin-right: 2px;
}
.tabs {
    display: flex;
    align-items: flex-end;
    height: 18px;
    padding-left: 2px;
    font-size: 10px;
}
.tab {
    box-sizing: border-box;
    width: 42px;
    height: 15px;
    border: 1px solid;
    border-color: #fff #000 transparent #fff;
    border-bottom: 0;
    justify-content: flex-start;
    padding-left: 4px;
}
.tab.active {
    width: 43px;
    height: 18px;
    padding-left: 5px;
    border-right-width: 2px;
}
.panel {
    flex: 1;
    display: flex;
    flex-direction: column;
    min-height: 0;
    border-left: 1px solid #fff;
    border-bottom: 2px solid #000;
    box-shadow: inset -1px 0 #808080;
}
.node-tools {
    display: flex;
    align-items: center;
    height: 36px;
    padding-left: 5px;
}
.node-tools button {
    width: 23px;
    height: 24px;
}
.node-tools .pressed {
    width: 25px;
}
.node-tools .more {
    margin-left: 14px;
}
.panel-title {
    margin: 0;
    padding: 0 0 4px 8px;
    font-size: 14px;
    font-weight: normal;
    line-height: 20px;
}
.panel-title span {
    margin-left: 5px;
}
.grid-wrap {
    flex: 1;
    display: flex;
    justify-content: space-between;
    min-height: 0;
    overflow: hidden;
    padding: 0 4px 0 3px;
}
table {
    align-self: flex-start;
    table-layout: fixed;
    width: 221px;
    border-spacing: 0;
    font-size: 11px;
}
th, td {
    height: 13px;
    padding: 0 0 0 4px;
    line-height: 13px;
    text-align: left;
    font-weight: normal;
    background: #fff;
    border-right: 1px solid #c0c0c0;
    border-bottom: 1px solid #c0c0c0;
}
thead th {
    padding-top: 1px;
    background: #c0c0c0;
    border-color: #808080;
}
th:first-child {
    width: 35px;
    background: #008080;
    color: #fff;
}
td.selected {
    background: #808080;
    color: #fff;
}
.scrollbar {
    display: flex;
    flex-direction: column;
    width: 16px;
    background: repeating-conic-gradient(#fff 0 25%, #c0c0c0 0 50%) 0 0 / 2px 2px;
}
.scrollbar button {
    box-sizing: border-box;
    height: 15px;
}
.scrollbar .thumb {
    height: 14px;
    margin-bottom: auto;
}
.copy-tools {
    display: flex;
    align-items: center;
    height: 38px;
    padding-left: 17px;
}
.copy-tools button {
    width: 31px;
}
.edit-tools {
    height: 55px;
    padding-left: 1px;
    color: #000080;
}
.edit-tools .row {
    height: 36px;
}
.edit-tools .row button {
    width: 25px;
}
.edit-tools .keys {
    height: 12px;
    padding-left: 2px;
    font-size: 12px;
}
.edit-tools .keys button {
    width: 22px;
}
.edit-tools .keys .wide {
    width: 25px;
}
.keys .clear {
    font-size: 14px;
}

/* drawing area */
.model {
    flex: 1;
    min-width: 0;
    height: 100%;
    background: #000;
}
.steel {
    fill: #808000;
}
.edge {
    stroke: #fff;
}
```

FILE: script.js
```
const nodes = [
    [0, 0, 0], [2200, 0, 0], [0, 0, 2200], [2200, 0, 2200],
    [0, 1000, 0], [2200, 1000, 0], [0, 1000, 2200], [2200, 1000, 2200],
    [0, 6500, 0], [2200, 6500, 0], [0, 6500, 2200], [2200, 6500, 2200],
    [0, 8500, 0], [2200, 8500, 0], [0, 8500, 2200], [2200, 8500, 2200],
    [2200, 9700, 2200], [0, 9700, 2200], [0, 9700, 0], [2200, 1000, 1700],
    [2200, 1000, 500], [0, 1000, 1700], [0, 1000, 500], [1700, 1000, 500],
    [500, 1000, 500], [1700, 1000, 1700], [500, 1000, 1700], [1700, 1000, 2200],
    [500, 1000, 2200], [1700, 1000, 0], [500, 1000, 0], [2200, 3750, 0],
    [2200, 3750, 2200], [0, 3750, 0], [0, 3750, 2200], [-1000, 6500, 0],
    [-1000, 6500, 2200], [0, 6500, -1100], [-1000, 6500, -1100], [0, 6500, 3200],
    [2200, 6500, 3200], [-1000, 6500, 3200], [0, 6000, 0], [0, 6000, 2200],
    [2200, 6000, 2200], [0, 6500, 2700], [2200, 6500, 2700], [-500, 6500, 2200],
    [-500, 6500, 0], [0, 6500, -550], [2200, 7500, 1100], [0, 7500, 1100],
    [2200, 5125, 1100], [0, 5125, 1100], [0, 2375, 1100], [2200, 6500, 500],
    [2200, 6500, 1700], [0, 6500, 500], [0, 6500, 1700], [500, 6500, 2200],
    [1700, 6500, 2200], [500, 6500, 0]
];

document.getElementById('node-rows').innerHTML = nodes.map((node, i) =>
    `<tr><th>${i + 1}</th>` + node.map((value, j) =>
        `<td${i === 0 && j === 0 ? ' class="selected"' : ''}>${value}</td>`).join('') + '</tr>'
).join('');

// line positions across a member, from the first edge to the second
const I = [0.15, 0.85];
const H = [0.2, 0.4];
const D = [0.35, 0.65];
const W = [0.2, 0.42, 0.7];
const L = [0.5];

// each member: first edge x1 y1 x2 y2, second edge x1 y1 x2 y2, inner lines
// listed from the back of the frame to the front
const members = [
    // left side beams
    [857, 268, 751, 347, 857, 290, 773, 349, W],
    // back left column
    [860, 193, 863, 888, 867, 194, 871, 890, []],
    [842, 185, 848, 895, 859, 191, 863, 899, L],
    // bottom frame
    [863, 822, 1014, 866, 863, 837, 1004, 877, W],
    [847, 843, 997, 888, 842, 850, 983, 897, W],
    [888, 831, 802, 917, 904, 838, 817, 918, W],
    [975, 855, 885, 947, 991, 860, 900, 947, W],
    [794, 887, 913, 920, 778, 898, 913, 937, W],
    // outer frame at 6500, back
    [897, 397, 1140, 457, 898, 404, 1138, 467, I],
    [897, 397, 868, 418, 900, 404, 872, 428, H],
    [880, 409, 873, 426, 884, 410, 879, 420, []],
    // back beams between columns
    [859, 273, 927, 288, 859, 286, 927, 303, I],
    [859, 425, 1012, 464, 859, 442, 1007, 479, W],
    [861, 630, 1013, 670, 861, 645, 1007, 685, W],
    // back right column
    [1028, 220, 1019, 939, 1037, 222, 1026, 941, []],
    [1011, 230, 1002, 944, 1028, 228, 1018, 949, L],
    // left side beams, lower levels
    [850, 427, 764, 491, 856, 443, 764, 514, W],
    [849, 636, 764, 709, 862, 643, 764, 727, W],
    [845, 828, 764, 903, 848, 843, 764, 922, W],
    // left side braces
    [845, 297, 768, 478, 852, 293, 769, 488, L],
    [768, 363, 850, 430, 778, 363, 855, 425, L],
    [845, 453, 772, 672, 856, 443, 772, 692, D],
    [767, 521, 850, 626, 773, 523, 854, 615, L],
    [861, 443, 913, 523, 869, 445, 913, 512, L],
    [861, 643, 913, 723, 870, 643, 913, 711, L],
    [913, 567, 762, 718, 930, 566, 762, 728, L],
    [920, 768, 765, 912, 926, 776, 766, 922, L],
    [765, 520, 915, 755, 775, 525, 915, 741, L],
    [767, 730, 915, 951, 775, 728, 915, 935, L],
    // right side braces
    [935, 399, 1018, 467, 935, 409, 1010, 472, L],
    [1012, 338, 937, 522, 1020, 325, 937, 536, L],
    [936, 566, 1008, 672, 950, 566, 1014, 670, D],
    [1008, 500, 936, 723, 1018, 490, 936, 745, D],
    [936, 742, 1014, 868, 936, 752, 1008, 868, L],
    [934, 771, 1011, 869, 934, 788, 1005, 871, D],
    [1008, 698, 936, 929, 1018, 695, 936, 948, D],
    // right side beams
    [1017, 318, 936, 378, 1024, 328, 936, 399, W],
    [1010, 477, 936, 535, 1021, 489, 936, 558, W],
    [1008, 680, 936, 740, 1021, 690, 932, 773, W],
    [1004, 880, 936, 937, 1020, 882, 930, 971, W],
    // front left beams
    [752, 347, 913, 386, 752, 358, 913, 399, I],
    [762, 503, 915, 544, 756, 516, 922, 563, W],
    [767, 713, 915, 754, 760, 723, 922, 773, W],
    [770, 909, 915, 949, 762, 920, 923, 972, W],
    // front left column
    [760, 360, 771, 977, 769, 362, 778, 979, [0.2]],
    [742, 353, 755, 982, 760, 359, 771, 987, L],
    // front column
    [930, 300, 929, 1031, 939, 301, 937, 1033, []],
    [913, 300, 912, 1035, 931, 296, 929, 1041, L],
    // knee braces
    [903, 322, 922, 337, 908, 320, 922, 330, []],
    [957, 312, 932, 330, 967, 315, 932, 339, []],
    [1056, 237, 1030, 255, 1065, 238, 1030, 264, []],
    [1048, 492, 1025, 505, 1058, 492, 1025, 512, []],
    [950, 572, 931, 585, 960, 573, 931, 594, []],
    // outer frame at 6500, right and front
    [1060, 437, 1025, 464, 1063, 447, 1034, 471, H],
    [1025, 472, 1099, 491, 1025, 485, 1090, 502, I],
    [1138, 457, 956, 618, 1139, 467, 958, 628, D],
    [931, 553, 1005, 573, 931, 565, 1003, 583, I],
    [920, 560, 875, 597, 930, 569, 889, 602, D],
    [875, 597, 957, 618, 875, 605, 957, 628, I],
    // top frame
    [899, 147, 1147, 205, 899, 159, 1145, 217, I],
    [899, 147, 852, 178, 899, 159, 872, 180, H],
    [875, 165, 870, 180, 879, 167, 875, 178, []],
    [851, 178, 1027, 218, 851, 190, 1020, 232, [0.25, 0.4, 0.9]],
    [1046, 202, 1036, 220, 1049, 204, 1044, 219, []],
    [1067, 186, 1024, 217, 1067, 198, 1034, 223, H],
    [1024, 217, 924, 292, 1029, 231, 943, 297, W],
    [924, 292, 873, 334, 930, 303, 889, 336, D],
    [1027, 218, 1105, 237, 1025, 231, 1091, 246, I],
    [927, 292, 1010, 312, 927, 305, 997, 322, I],
    [1145, 206, 957, 353, 1147, 217, 957, 368, D],
    [873, 334, 958, 353, 873, 345, 958, 366, I]
];

// joints and splice marks
const marks = [
    [842, 225, 858, 228], [860, 220, 867, 221], [841, 185, 841, 212],
    [892, 185, 892, 199], [985, 207, 985, 221], [1063, 226, 1063, 238],
    [1011, 266, 1028, 269], [1030, 262, 1037, 263], [966, 303, 966, 315],
    [893, 433, 893, 448], [982, 463, 982, 473], [1058, 482, 1058, 493],
    [850, 473, 860, 475], [861, 467, 868, 468], [745, 512, 764, 518],
    [795, 514, 795, 527], [886, 541, 886, 553], [912, 559, 930, 564],
    [964, 565, 964, 573], [913, 598, 929, 603], [1013, 518, 1024, 520],
    [893, 638, 893, 650], [980, 664, 980, 675], [750, 718, 765, 724],
    [799, 724, 799, 734], [887, 747, 887, 760], [913, 398, 931, 404],
    [1020, 678, 1029, 679], [753, 914, 771, 918], [801, 920, 801, 931],
    [887, 946, 888, 959], [1018, 872, 1026, 873], [912, 967, 922, 972],
    [922, 972, 930, 971], [930, 961, 937, 962],
    [902, 149, 902, 159], [1067, 186, 1067, 200],
    [1143, 206, 1150, 207], [1144, 217, 1148, 216], [1100, 239, 1105, 247]
];

const between = (a, b, t) => a + (b - a) * t;

let drawing = '';
members.forEach(([x1, y1, x2, y2, x3, y3, x4, y4, inner]) => {
    drawing += `<path class="steel edge" d="M${x1} ${y1}L${x2} ${y2}L${x4} ${y4}L${x3} ${y3}z"/>`;
    inner.forEach(t => {
        drawing += `<path class="edge" d="M${between(x1, x3, t)} ${between(y1, y3, t)}L${between(x2, x4, t)} ${between(y2, y4, t)}"/>`;
    });
});
marks.forEach(([x1, y1, x2, y2]) => {
    drawing += `<path class="edge" d="M${x1} ${y1}L${x2} ${y2}"/>`;
});
document.getElementById('model').innerHTML = drawing;
```
